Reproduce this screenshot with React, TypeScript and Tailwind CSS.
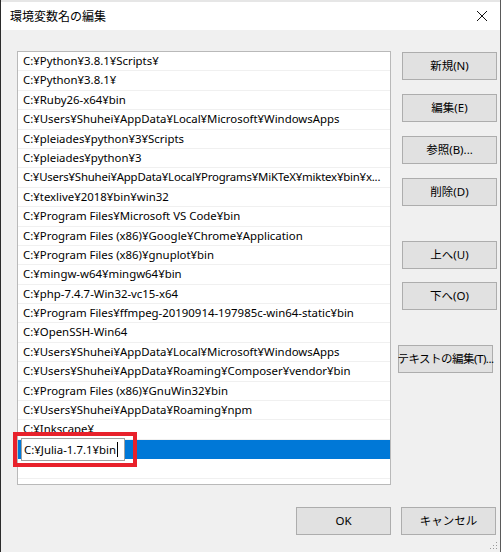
import React from 'react';

const paths = [
  'C:¥Python¥3.8.1¥Scripts¥',
  'C:¥Python¥3.8.1¥',
  'C:¥Ruby26-x64¥bin',
  'C:¥Users¥Shuhei¥AppData¥Local¥Microsoft¥WindowsApps',
  'C:¥pleiades¥python¥3¥Scripts',
  'C:¥pleiades¥python¥3',
  'C:¥Users¥Shuhei¥AppData¥Local¥Programs¥MiKTeX¥miktex¥bin¥x...',
  'C:¥texlive¥2018¥bin¥win32',
  'C:¥Program Files¥Microsoft VS Code¥bin',
  'C:¥Program Files (x86)¥Google¥Chrome¥Application',
  'C:¥Program Files (x86)¥gnuplot¥bin',
  'C:¥mingw-w64¥mingw64¥bin',
  'C:¥php-7.4.7-Win32-vc15-x64',
  'C:¥Program Files¥ffmpeg-20190914-197985c-win64-static¥bin',
  'C:¥OpenSSH-Win64',
  'C:¥Users¥Shuhei¥AppData¥Local¥Microsoft¥WindowsApps',
  'C:¥Users¥Shuhei¥AppData¥Roaming¥Composer¥vendor¥bin',
  'C:¥Program Files (x86)¥GnuWin32¥bin',
  'C:¥Users¥Shuhei¥AppData¥Roaming¥npm',
  'C:¥Inkscape¥',
];

function Btn({ label, className = '' }: { label: string; className?: string }) {
  return (
    <button className={`w-[95px] h-[28px] bg-[#e1e1e1] border border-[#adadad] text-[11.5px] text-black whitespace-nowrap flex items-center justify-center ${className}`}>
      {label}
    </button>
  );
}

export default function App() {
  return (
    <div
      className="relative w-[501px] h-[552px] overflow-hidden bg-[#f0f0f0] border-l border-l-[#2b2b2b] border-r border-r-[#5a5a5a] text-black"
      style={{ fontFamily: '"Noto Sans", "Noto Sans CJK JP", sans-serif' }}
    >
      <div className="h-[2px] bg-[#e6e6e6]" />
      <div className="h-[28px] bg-white flex items-center justify-between pl-[9px] pr-[10px]">
        <span className="text-[12px]" style={{ fontFamily: '"Noto Sans CJK JP", sans-serif' }}>環境変数名の編集</span>
        <svg width="12" height="12" viewBox="0 0 12 12" className="mr-[2px]">
          <path d="M1 1 L11 11 M11 1 L1 11" stroke="#111" strokeWidth="1" />
        </svg>
      </div>

      <div className="flex">
        <div className="ml-[16px] mt-[21px] w-[374px] h-[434px] bg-white border border-[#b9b9b9]">
          {paths.map((p, i) => (
            <div
              key={i}
              className={`h-[19.4px] border-b border-[#f0f0f0] pl-[5px] text-[11.4px] leading-[18px] whitespace-nowrap overflow-hidden ${i === 6 ? 'tracking-[-0.2px]' : ''}`}
            >
              {p}
            </div>
          ))}
          <div className="relative h-[19.4px] bg-[#0078d7]">
            <div className="absolute left-[3px] top-[-2px] w-[104px] h-[23px] bg-white border border-[#a0a0a0] pl-[2px] text-[11.4px] leading-[21px] flex items-center">
              <span>C:¥Julia-1.7.1¥bin</span>
              <span className="ml-[1px] w-[1px] h-[15px] bg-black" />
            </div>
          </div>
          <div className="h-[19.4px] border-b border-[#f0f0f0]" />
        </div>

        <div className="ml-[11px] mt-[22px] flex flex-col">
          <Btn label="新規(N)" />
          <Btn label="編集(E)" className="mt-[14px]" />
          <Btn label="参照(B)..." className="mt-[14px]" />
          <Btn label="削除(D)" className="mt-[14px]" />
          <Btn label="上へ(U)" className="mt-[35px]" />
          <Btn label="下へ(O)" className="mt-[13px]" />
          <Btn label="テキストの編集(T)..." className="mt-[35px] -ml-[4px] tracking-[-0.5px]" />
        </div>
      </div>

      <div className="flex justify-end gap-[10px] pr-[4px] mt-[22px]">
        <Btn label="OK" />
        <Btn label="キャンセル" />
      </div>

      <div className="absolute left-[12px] top-[432px] w-[124px] h-[35px] border-[4px] border-[#e8212b]" />

      <svg className="absolute right-[2px] bottom-[2px]" width="8" height="8" viewBox="0 0 8 8">
        <rect x="6" y="0" width="1" height="1" fill="#999" />
        <rect x="3" y="3" width="1" height="1" fill="#999" />
        <rect x="6" y="3" width="1" height="1" fill="#999" />
        <rect x="0" y="6" width="1" height="1" fill="#999" />
        <rect x="3" y="6" width="1" height="1" fill="#999" />
        <rect x="6" y="6" width="1" height="1" fill="#999" />
      </svg>
    </div>
  );
}
